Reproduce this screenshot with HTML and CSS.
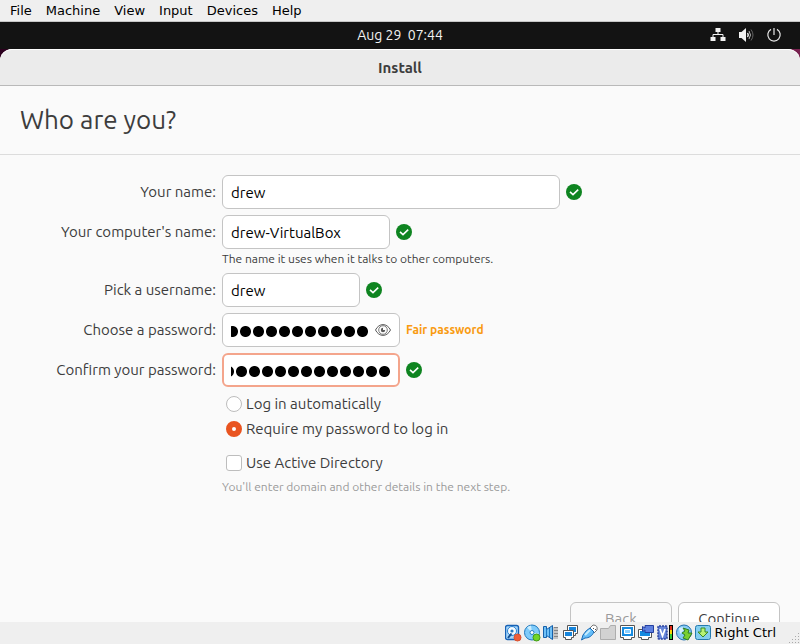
FILE: index.html
```html
<!DOCTYPE html>
<html lang="en">
<head>
<meta charset="utf-8">
<title>Install</title>
<meta name="viewport" content="width=device-width, initial-scale=1">
<link rel="stylesheet" href="styles.css">
</head>
<body>
<svg class="defs" aria-hidden="true">
  <symbol id="ok" viewBox="0 0 16 16"><circle cx="8" cy="8" r="8" fill="#0e8420"/><path d="M4 7.800 7 10.600 12.200 5.600" fill="none" stroke="#fff" stroke-width="1.600"/></symbol>
</svg>
<nav class="menu">
  <button>File</button><button>Machine</button><button>View</button><button>Input</button><button>Devices</button><button>Help</button>
</nav>
<div class="screen">
  <div class="topbar">
    <time class="clock">Aug 29&nbsp; 07:44</time>
    <div class="tray">
      <svg width="16" height="16" viewBox="0 0 16 16" fill="#f2f2f2"><path d="M5.500 1h5v4h-5zM.5 10h5v4h-5zM10.500 10h5v4h-5z"/><path d="M8 5v3M3 10.500V7.500h10v3" fill="none" stroke="#f2f2f2"/></svg>
      <svg width="16" height="16" viewBox="0 0 16 16" fill="none" stroke="#f2f2f2"><path d="M1 5h2.500L8 1v14l-4.500-4H1z" fill="#f2f2f2" stroke="none"/><path d="M9.500 6q1.500 2 0 4" stroke-width="1.400"/><path d="M11 4q3 4 0 8" stroke="#b8b8b8"/><path d="M13 2.500q4 5.500 0 11" stroke="#626262"/></svg>
      <svg width="16" height="16" viewBox="0 0 16 16" fill="none" stroke="#e8e8e8" stroke-width="1.200"><path d="M8 1v7M5 2.400a6.200 6.200 0 1 0 6 0"/></svg>
    </div>
  </div>
  <main class="window">
    <header class="titlebar">Install</header>
    <h1>Who are you?</h1>
    <form class="form">
      <label class="name" for="fullname">Your name:</label>
      <div class="row"><input class="field long" id="fullname" type="text" value="drew"><svg class="ok"><use href="#ok"/></svg></div>
      <label class="name" for="host">Your computer's name:</label>
      <div>
        <div class="row"><input class="field host" id="host" type="text" value="drew-VirtualBox"><svg class="ok"><use href="#ok"/></svg></div>
        <p class="hint">The name it uses when it talks to other computers.</p>
      </div>
      <label class="name" for="user">Pick a username:</label>
      <div class="row"><input class="field user" id="user" type="text" value="drew"><svg class="ok"><use href="#ok"/></svg></div>
      <label class="name" for="pass">Choose a password:</label>
      <div class="row">
        <div class="secret">
          <input class="field dots with-eye" id="pass" type="password" value="abcdefghijklm">
          <button class="eye" type="button" aria-label="Show password"><svg width="16" height="16" viewBox="0 0 16 16" fill="none" stroke="#5a5a5a"><path d="M.5 8C4 .8 12 .8 15.500 8 12 15.200 4 15.200.5 8z"/><circle cx="8" cy="8" r="4.300" stroke-width=".8"/><circle cx="8" cy="8" r="2.200" fill="#5a5a5a" stroke="none"/><path d="M8 8V5.500h2.500V8z" fill="#fff" stroke="none"/></svg></button>
        </div>
        <span class="strength">Fair password</span>
      </div>
      <label class="name" for="confirm">Confirm your password:</label>
      <div class="row"><input class="field dots focused" id="confirm" type="password" value="abcdefghijklm"><svg class="ok"><use href="#ok"/></svg></div>
      <div class="options">
        <label class="choice"><input type="radio" name="login">Log in automatically</label>
        <label class="choice"><input type="radio" name="login" checked>Require my password to log in</label>
        <label class="choice directory"><input type="checkbox">Use Active Directory</label>
        <p class="hint muted">You'll enter domain and other details in the next step.</p>
      </div>
    </form>
    <footer class="actions">
      <button class="action" disabled>Back</button>
      <button class="action">Continue</button>
    </footer>
  </main>
</div>
<div class="status">
  <svg width="17" height="18" viewBox="0 0 17 18"><rect x=".5" y="1.500" width="13" height="14" rx="2" fill="#a5d6fb" stroke="#1761b5" stroke-width="1.400"/><circle cx="7" cy="7" r="4.500" fill="#f4faff" stroke="#2980d0"/><circle cx="7" cy="7" r="1.600" fill="#2878c0"/><path d="M3 14 6.500 9.500" stroke="#174f91" stroke-width="2"/><circle cx="12.500" cy="13.500" r="3.500" fill="#ef5d38" stroke="#d8512e"/></svg>
  <svg width="17" height="18" viewBox="0 0 17 18"><circle cx="8" cy="8.500" r="7.500" fill="#7fcbfa" stroke="#2078bd"/><path d="M8 8.500 3 3.500A7 7 0 0 1 7 1.500zM8 8.500l5 5a7 7 0 0 0 2-4z" fill="#c9edff"/><circle cx="8" cy="8.500" r="2" fill="#fff" stroke="#287fc0"/><circle cx="12.500" cy="13.500" r="3.500" fill="#71d526" stroke="#419b16"/></svg>
  <svg width="17" height="18" viewBox="0 0 17 18"><path d="M7 3h8v12H7z" fill="#c4c4c4"/><path d="M11 3.500h4M11 6.500h4M11 9.500h4M11 12.500h4" stroke="#858585"/><path d="M.5 2.500h3v3l6-4v14l-6-4v2h-3z" fill="#6fc0f6" stroke="#1660aa"/><path d="M3.500 5v7M6.500 4v9" stroke="#1c78c4"/></svg>
  <svg width="17" height="18" viewBox="0 0 17 18"><path d="M5.500 1.500h10v8h-2v2h-5v-2h-3z" fill="#fff" stroke="#555"/><path d="M7 3h7v5H7z" fill="#1685dc"/><path d="M1.500 6.500h10v7h-2v2h-6v-2h-2z" fill="#fff" stroke="#555"/><path d="M3 8h7v4H3z" fill="#1685dc"/></svg>
  <svg width="17" height="18" viewBox="0 0 17 18"><path d="m9 4 3-3q5 0 4 5l-3 3z" fill="#fff" stroke="#777"/><path d="M12 4h1v1h-1zM14 5h1v1h-1z" fill="#555"/><path d="M.5 16 2 11q3-5 7-7l4 4c-2 4-5 6-9 6z" fill="#65bdf8" stroke="#1869b4"/><path d="m4 11 5-5" stroke="#c5ecff" stroke-width="2"/></svg>
  <svg width="17" height="18" viewBox="0 0 17 18"><path d="M.5 4.500h8l2-3h5v14H.5z" fill="#d2d2d2" stroke="#adadad"/></svg>
  <svg width="17" height="18" viewBox="0 0 17 18"><path d="M1.500 1.500h14v12h-3v2h-8v-2h-3z" fill="#fff" stroke="#555"/><path d="M3 3h11v9H3z" fill="#168be0"/><path d="M5.500 5.500h6v4h-6z" fill="#8bd0ff" stroke="#fff"/></svg>
  <svg width="17" height="18" viewBox="0 0 17 18"><path d="M.5 5.500h13v8h-3v2h-7v-2h-3z" fill="#fff" stroke="#555"/><path d="M2 7h10v5H2z" fill="#168be0"/><path d="M4.500 2.500 7 4V1.500h8.500v7H7V6L4.500 7.500z" fill="#5e80df" stroke="#243fa0"/></svg>
  <svg width="17" height="18" viewBox="0 0 17 18"><rect x="1" y="2" width="9" height="13" rx="1" fill="#6685d8" stroke="#2b43a0" stroke-width="1.500" stroke-dasharray="2 1"/><path d="m3 5 2.500 7L8 5" fill="none" stroke="#fff" stroke-width="1.700"/><path d="M12 1h4v15h-4z"/><path d="M13 2h2v4h-2z" fill="#e42c19"/><path d="M13 6h2v4h-2z" fill="#f9d900"/><path d="M13 10h2v5h-2z" fill="#32c934"/></svg>
  <svg width="17" height="18" viewBox="0 0 17 18"><circle cx="8" cy="8.500" r="7.500" fill="#86cbf5" stroke="#246fae"/><path d="M3 4q5-2 6 1L4 10z" fill="#d5efff"/><path d="m7 4 6 2-1 3h4l-4 7-5-2 2-3-3-2 3-2z" fill="#79cf31" stroke="#317f26"/></svg>
  <svg width="17" height="18" viewBox="0 0 17 18"><rect x=".5" y="1.500" width="15" height="14" rx="2" fill="#83cef0" stroke="#247aae"/><path d="M6 4h4v4h3l-5 5-5-5h3z" fill="#b7f277" stroke="#398c25"/></svg>
  <span class="hostkey">Right Ctrl</span>
  <svg class="grip" width="12" height="12" viewBox="0 0 12 12" fill="#aaa"><path d="M10 1h1v1h-1zM10 4h1v1h-1zM7 4h1v1H7zM10 7h1v1h-1zM7 7h1v1H7zM4 7h1v1H4zM10 10h1v1h-1zM7 10h1v1H7zM4 10h1v1H4zM1 10h1v1H1z"/></svg>
</div>
</body>
</html>
```
FILE: styles.css
```css
* { box-sizing: border-box; }
body {
  margin: 0;
  height: 100vh;
  display: flex;
  flex-direction: column;
  overflow: hidden;
  background: #efefef;
  color: #3d3d3d;
  font: 15px/22px "Ubuntu", "Noto Sans", sans-serif;
}
button, input { font: inherit; color: inherit; }
svg { display: block; flex: none; }
p, h1 { margin: 0; }
.defs { position: absolute; width: 0; height: 0; }
.menu {
  display: flex;
  flex: none;
  gap: 14px;
  height: 22px;
  padding: 0 10px;
  border-bottom: 1px solid #c6c6c6;
  font: 13px/20px "DejaVu Sans", sans-serif;
  color: #000;
}
.menu button { padding: 0; border: 0; background: none; }
.screen {
  flex: 1;
  min-height: 0;
  display: flex;
  flex-direction: column;
  overflow: hidden;
  background: linear-gradient(90deg, #2c001e, #77214f);
}
.topbar {
  flex: none;
  display: grid;
  grid-template-columns: 1fr auto 1fr;
  align-items: center;
  height: 27px;
  padding: 0 18px 2px;
  background: #131313;
  color: #f2f2f2;
}
.clock { grid-column: 2; font-size: 14px; }
.tray { display: flex; justify-content: flex-end; gap: 12px; }
.window {
  flex: 1;
  min-height: 0;
  display: flex;
  flex-direction: column;
  background: #fafafa;
  border-radius: 12px 12px 0 0;
}
.titlebar {
  flex: none;
  height: 37px;
  border-top: 1px solid #fff;
  border-bottom: 1px solid #b9b9b9;
  border-radius: 12px 12px 0 0;
  background: #ebebeb;
  font-weight: 700;
  line-height: 36px;
  text-align: center;
}
h1 {
  flex: none;
  padding: 0 20px;
  border-bottom: 1px solid #dcdcdc;
  font-size: 26px;
  font-weight: 400;
  line-height: 68px;
}
.form {
  display: grid;
  grid-template-columns: 216px 1fr;
  gap: 6px;
  padding-top: 20px;
}
.name { line-height: 34px; text-align: right; }
.row { display: flex; align-items: center; gap: 6px; }
.field {
  height: 34px;
  padding: 0 8px;
  border: 1px solid #c4c4c4;
  border-radius: 6px;
  outline: 0;
  background: #fff;
  color: #000;
}
.long { width: 338px; }
.host { width: 168px; }
.user { width: 138px; }
.dots {
  width: 178px;
  color: transparent;
  background:
    radial-gradient(circle, #000 5px, transparent 6px) right 11px / 13px 13px repeat-x content-box,
    #fff;
}
.with-eye { padding-right: 30px; }
.focused { border: 2px solid #f4a58c; padding: 0 7px; background-position: right 10px; }
.secret { position: relative; }
.eye {
  position: absolute;
  top: 9px;
  right: 9px;
  padding: 0;
  border: 0;
  background: none;
}
.ok { width: 16px; height: 16px; }
.strength { color: #f99b11; font-size: 12px; font-weight: 700; }
.hint { padding-top: 2px; font-size: 12px; line-height: 16px; }
.muted { color: #9b9b9b; }
.options { grid-column: 2; display: flex; flex-direction: column; gap: 3px; }
.choice { display: flex; align-items: center; gap: 4px; padding-left: 4px; }
.choice input {
  appearance: none;
  width: 16px;
  height: 16px;
  margin: 0;
  border: 1px solid #bdbdbd;
  border-radius: 3px;
  background: #fff;
}
.choice input[type="radio"] { border-radius: 50%; }
.choice input:checked { border: 6px solid #e95420; }
.directory { margin-top: 9px; }
.actions {
  display: flex;
  justify-content: flex-end;
  gap: 6px;
  margin: auto 20px -14px;
}
.action {
  width: 102px;
  height: 34px;
  border: 1px solid #c4c4c4;
  border-radius: 6px;
  background: #fff;
}
.action:disabled { background: #fafafa; color: #9b9b9b; }
.status {
  flex: none;
  display: flex;
  align-items: center;
  justify-content: flex-end;
  gap: 2px;
  height: 22px;
  background: #efefef;
  color: #000;
  font: 13px/22px "DejaVu Sans", sans-serif;
}
.hostkey { padding: 0 10px 0 1px; }
.grip { align-self: flex-end; }
```
